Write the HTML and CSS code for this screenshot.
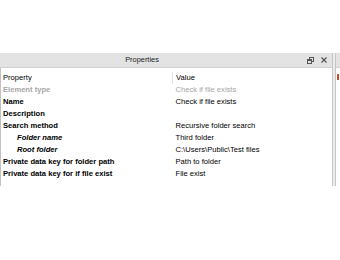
FILE: index.html
```html
<!DOCTYPE html>
<html lang="en">
<head>
<meta charset="UTF-8">
<title>Properties</title>
<link rel="stylesheet" href="styles.css">
</head>
<body>
<div id="dock">
  <section id="props-panel">
    <div class="panel-title">
      <span class="title-text">Properties</span>
      <span class="title-buttons">
        <svg class="btn-float" width="7" height="7" viewBox="0 0 7 7">
          <rect x="2.5" y="0.5" width="4" height="4" fill="none" stroke="#555"/>
          <rect x="0" y="2" width="5" height="5" fill="#555"/>
          <rect x="1" y="4" width="3" height="2" fill="#e3e3e3"/>
        </svg>
        <svg class="btn-close" width="6" height="6" viewBox="0 0 6 6">
          <path d="M0.5 0.5 L5.5 5.5 M5.5 0.5 L0.5 5.5" stroke="#555" stroke-width="1.2"/>
        </svg>
      </span>
    </div>
    <div class="panel-body">
      <table id="props-table">
        <tr class="head"><th>Property</th><th class="val">Value</th></tr>
        <tr class="disabled"><td>Element type</td><td class="val">Check if file exists</td></tr>
        <tr><td>Name</td><td class="val">Check if file exists</td></tr>
        <tr><td>Description</td><td class="val"></td></tr>
        <tr><td>Search method</td><td class="val">Recursive folder search</td></tr>
        <tr class="sub"><td>Folder name</td><td class="val">Third folder</td></tr>
        <tr class="sub"><td>Root folder</td><td class="val">C:\Users\Public\Test files</td></tr>
        <tr><td>Private data key for folder path</td><td class="val">Path to folder</td></tr>
        <tr><td>Private data key for if file exist</td><td class="val">File exist</td></tr>
      </table>
    </div>
  </section>
  <div class="splitter"></div>
  <section id="side-panel">
    <div class="side-title"></div>
    <div class="side-body"><span class="mark"></span></div>
  </section>
</div>
</body>
</html>
```

FILE: styles.css
```css
body {
  margin: 0;
  background-color: #fff;
  font-family: "Liberation Sans", Arial, sans-serif;
  font-size: 7.6px;
  color: #000;
}
#dock {
  display: flex;
  margin-top: 53px;
  height: 133px;
}
#props-panel {
  flex: 0 0 332px;
  display: flex;
  flex-direction: column;
}
.panel-title,
.side-title {
  height: 14px;
  background-color: #e3e3e3;
  border-bottom: 1px solid #d0d0d0;
}
.panel-title {
  position: relative;
  text-align: center;
  line-height: 14px;
  padding-right: 48px;
  font-size: 7.4px;
  color: #222;
}
.title-buttons {
  position: absolute;
  right: 5px;
  top: 4px;
  display: flex;
  gap: 7px;
}
.panel-body {
  flex: 1;
  border-left: 1px solid #c2c2c2;
}
#props-table {
  border-collapse: collapse;
  table-layout: fixed;
  width: 100%;
  margin-top: 4px;
}
#props-table td,
#props-table th {
  padding: 0 0 0 2px;
  height: 12px;
  line-height: 12px;
  white-space: nowrap;
  overflow: hidden;
  text-align: left;
  font-weight: bold;
}
#props-table th {
  font-weight: normal;
  width: 169px;
}
#props-table td.val,
#props-table th.val {
  font-weight: normal;
  padding-left: 3px;
  width: auto;
}
#props-table tr.head th.val {
  border-left: 1px solid #e2e2e2;
}
#props-table tr.disabled td {
  color: #a6a6a6;
}
#props-table tr.sub td:first-child {
  font-style: italic;
  padding-left: 16px;
}
.splitter {
  flex: 0 0 4px;
  background-color: #ececec;
  border-left: 1px solid #c6c6c6;
  border-right: 1px solid #c6c6c6;
  box-sizing: border-box;
}
#side-panel {
  flex: 1;
  min-width: 0;
  display: flex;
  flex-direction: column;
}
.side-body {
  padding: 6px 0 0 1px;
}
.mark {
  display: block;
  width: 2px;
  height: 6px;
  background-color: #c0502a;
}
```
